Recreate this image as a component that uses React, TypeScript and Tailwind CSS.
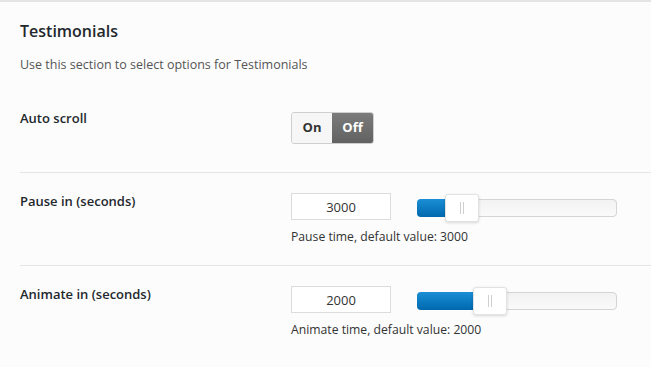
import { useState } from "react";

type SliderProps = { value: string; offset: number; help: string };

function Slider({ offset }: { offset: number }) {
  return (
    <div className="relative ml-[26px] mt-[6px] h-[18px] w-[200px] rounded-[4px] border border-[#d4d4d4] bg-gradient-to-b from-[#f2f2f2] to-[#fafafa]">
      <div
        className="absolute -left-px -top-px h-[18px] rounded-l-[4px] bg-gradient-to-b from-[#1a8fd6] to-[#0068ad]"
        style={{ width: offset + 2 }}
      />
      <div
        className="absolute -top-[6px] flex h-[28px] w-[34px] items-center justify-center gap-[2px] rounded-[3px] border border-[#e2e2e2] bg-white shadow-[0_1px_3px_rgba(0,0,0,0.15)]"
        style={{ left: offset - 1 }}
      >
        <span className="h-[12px] w-px bg-[#cfcfcf]" />
        <span className="h-[12px] w-px bg-[#cfcfcf]" />
      </div>
    </div>
  );
}

function NumberRow({ label, value, offset, help }: SliderProps & { label: string }) {
  return (
    <div className="flex border-t border-[#e5e5e5] pb-[19px] pt-5">
      <div className="w-[271px] text-[13px] font-semibold leading-[16px] text-[#23282d]">{label}</div>
      <div>
        <div className="flex items-start">
          <input
            readOnly
            value={value}
            className="h-[27px] w-[100px] border border-[#dcdcdc] bg-white text-center text-[13px] text-[#333] outline-none"
          />
          <Slider offset={offset} />
        </div>
        <p className="mt-[8px] text-[12.2px] leading-[18px] text-[#333]">{help}</p>
      </div>
    </div>
  );
}

export default function App() {
  const [auto, setAuto] = useState(false);

  return (
    <div className="min-h-[367px] border-t-2 border-[#e4e4e4] bg-[#fcfcfc] pl-5 font-['Open_Sans',sans-serif]">
      <h2 className="pt-[17px] text-[16px] font-semibold leading-[24px] text-[#23282d]">Testimonials</h2>
      <p className="mt-[13px] text-[12.5px] leading-[18px] text-[#555]">
        Use this section to select options for Testimonials
      </p>

      <div className="mt-[35px] flex pb-[28px]">
        <div className="w-[271px] text-[13px] font-semibold leading-[18px] text-[#23282d]">Auto scroll</div>
        <div className="mt-[3px] flex h-[32px] overflow-hidden rounded-[3px] border border-[#cfcfcf] text-[13px] font-bold">
          <button
            onClick={() => setAuto(true)}
            className={`w-[40px] ${auto ? "bg-gradient-to-b from-[#7b7b7b] to-[#626262] text-white" : "bg-[#f6f6f6] text-[#333]"}`}
          >
            On
          </button>
          <button
            onClick={() => setAuto(false)}
            className={`w-[41px] ${!auto ? "bg-gradient-to-b from-[#7b7b7b] to-[#626262] text-white" : "bg-[#f6f6f6] text-[#333]"}`}
          >
            Off
          </button>
        </div>
      </div>

      <NumberRow label="Pause in (seconds)" value="3000" offset={28} help="Pause time, default value: 3000" />
      <NumberRow label="Animate in (seconds)" value="2000" offset={56} help="Animate time, default value: 2000" />
    </div>
  );
}
